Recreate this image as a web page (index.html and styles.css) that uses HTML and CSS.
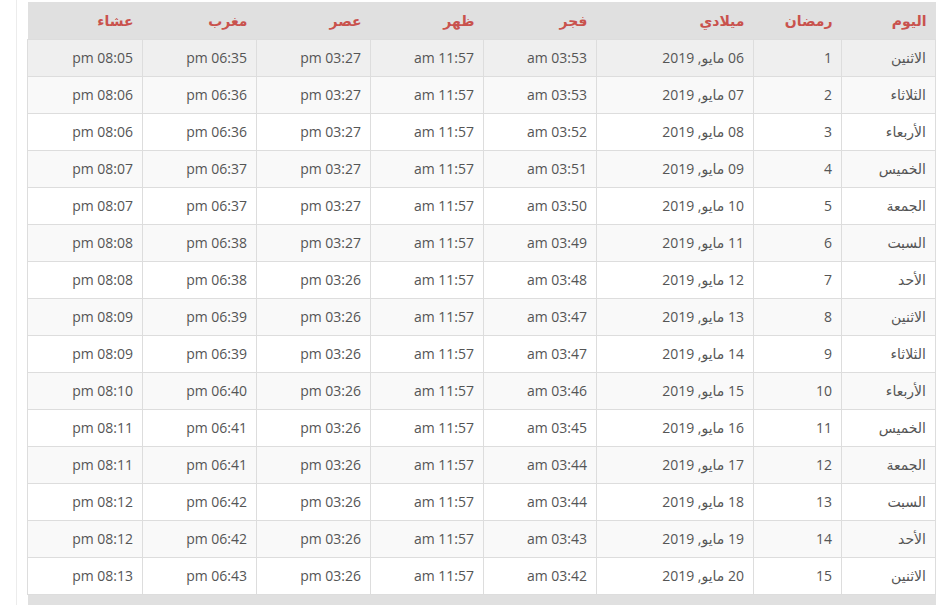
FILE: index.html
```html
<!DOCTYPE html>
<html lang="ar">
<head>
<meta charset="utf-8">
<title>إمساكية رمضان</title>
<link rel="stylesheet" href="styles.css">
</head>
<body>
<div class="wrap">
<table class="times" dir="rtl">
<colgroup>
<col class="c-day"><col class="c-ram"><col class="c-date"><col class="c-t"><col class="c-t"><col class="c-t2"><col class="c-t2"><col class="c-t3">
</colgroup>
<thead>
<tr><th>اليوم</th><th>رمضان</th><th>ميلادي</th><th>فجر</th><th>ظهر</th><th>عصر</th><th>مغرب</th><th>عشاء</th></tr>
</thead>
<tbody>
<tr class="active"><td>الاثنين</td><td>1</td><td>06 مايو, 2019</td><td>03:53 am</td><td>11:57 am</td><td>03:27 pm</td><td>06:35 pm</td><td>08:05 pm</td></tr>
<tr><td>الثلاثاء</td><td>2</td><td>07 مايو, 2019</td><td>03:53 am</td><td>11:57 am</td><td>03:27 pm</td><td>06:36 pm</td><td>08:06 pm</td></tr>
<tr><td>الأربعاء</td><td>3</td><td>08 مايو, 2019</td><td>03:52 am</td><td>11:57 am</td><td>03:27 pm</td><td>06:36 pm</td><td>08:06 pm</td></tr>
<tr><td>الخميس</td><td>4</td><td>09 مايو, 2019</td><td>03:51 am</td><td>11:57 am</td><td>03:27 pm</td><td>06:37 pm</td><td>08:07 pm</td></tr>
<tr><td>الجمعة</td><td>5</td><td>10 مايو, 2019</td><td>03:50 am</td><td>11:57 am</td><td>03:27 pm</td><td>06:37 pm</td><td>08:07 pm</td></tr>
<tr><td>السبت</td><td>6</td><td>11 مايو, 2019</td><td>03:49 am</td><td>11:57 am</td><td>03:27 pm</td><td>06:38 pm</td><td>08:08 pm</td></tr>
<tr><td>الأحد</td><td>7</td><td>12 مايو, 2019</td><td>03:48 am</td><td>11:57 am</td><td>03:26 pm</td><td>06:38 pm</td><td>08:08 pm</td></tr>
<tr><td>الاثنين</td><td>8</td><td>13 مايو, 2019</td><td>03:47 am</td><td>11:57 am</td><td>03:26 pm</td><td>06:39 pm</td><td>08:09 pm</td></tr>
<tr><td>الثلاثاء</td><td>9</td><td>14 مايو, 2019</td><td>03:47 am</td><td>11:57 am</td><td>03:26 pm</td><td>06:39 pm</td><td>08:09 pm</td></tr>
<tr><td>الأربعاء</td><td>10</td><td>15 مايو, 2019</td><td>03:46 am</td><td>11:57 am</td><td>03:26 pm</td><td>06:40 pm</td><td>08:10 pm</td></tr>
<tr><td>الخميس</td><td>11</td><td>16 مايو, 2019</td><td>03:45 am</td><td>11:57 am</td><td>03:26 pm</td><td>06:41 pm</td><td>08:11 pm</td></tr>
<tr><td>الجمعة</td><td>12</td><td>17 مايو, 2019</td><td>03:44 am</td><td>11:57 am</td><td>03:26 pm</td><td>06:41 pm</td><td>08:11 pm</td></tr>
<tr><td>السبت</td><td>13</td><td>18 مايو, 2019</td><td>03:44 am</td><td>11:57 am</td><td>03:26 pm</td><td>06:42 pm</td><td>08:12 pm</td></tr>
<tr><td>الأحد</td><td>14</td><td>19 مايو, 2019</td><td>03:43 am</td><td>11:57 am</td><td>03:26 pm</td><td>06:42 pm</td><td>08:12 pm</td></tr>
<tr><td>الاثنين</td><td>15</td><td>20 مايو, 2019</td><td>03:42 am</td><td>11:57 am</td><td>03:26 pm</td><td>06:43 pm</td><td>08:13 pm</td></tr>
</tbody>
<tfoot>
<tr><td colspan="8"></td></tr>
</tfoot>
</table>
</div>
</body>
</html>
```
FILE: styles.css
```css
html, body {
  margin: 0;
  padding: 0;
  background: #fff;
}
body {
  font-family: "Open Sans", "DejaVu Sans", sans-serif;
  color: #555;
  font-size: 14px;
}
.wrap {
  margin-left: 16px;
  border-left: 1px solid #ececec;
  padding: 2px 0 0 10px;
  height: 603px;
  overflow: hidden;
}
.times {
  width: 908px;
  border-collapse: collapse;
  table-layout: fixed;
}
.c-day { width: 94px; }
.c-ram { width: 88px; }
.c-date { width: 157px; }
.c-t { width: 113px; }
.c-t2 { width: 114px; }
.c-t3 { width: 115px; }
.times th {
  background: #e0e0e0;
  color: #c9524d;
  font-family: "DejaVu Sans", sans-serif;
  font-weight: bold;
  font-size: 14px;
  height: 37px;
  padding: 0 9px;
  text-align: right;
  border: none;
}
.times td {
  height: 36px;
  padding: 0 9px;
  line-height: 20px;
  border: 1px solid #dddddd;
  text-align: right;
  vertical-align: middle;
  white-space: nowrap;
}
.times tbody tr:nth-child(even) td { background: #f9f9f9; }
.times tbody tr:nth-child(odd) td { background: #ffffff; }
.times tbody tr.active td { background: #efefef; }
.times tfoot td {
  background: #e0e0e0;
  border: none;
  height: 38px;
}
```
